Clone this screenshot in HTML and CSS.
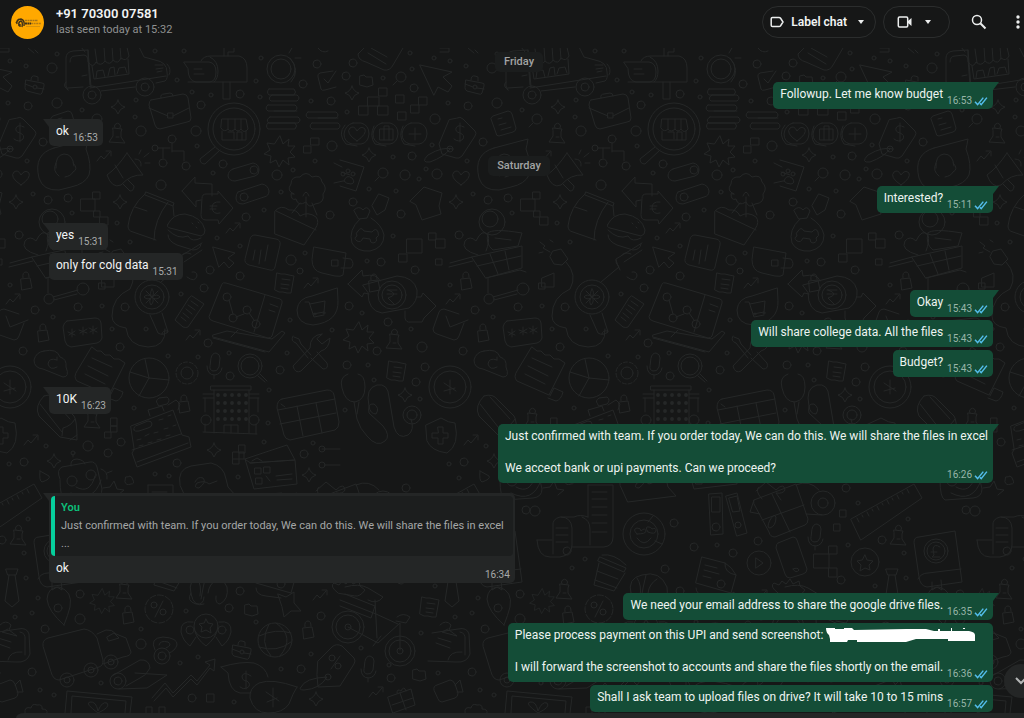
FILE: index.html
```html
<!DOCTYPE html>
<html lang="en">
<head>
<meta charset="utf-8">
<meta name="viewport" content="width=device-width, initial-scale=1">
<title>+91 70300 07581</title>
<link rel="stylesheet" href="styles.css">
</head>
<body>
<svg class="defs" width="0" height="0" aria-hidden="true">
  <defs>
    <symbol id="ticks" viewBox="0 0 14 10"><path d="M1 5.8 L3.6 8.6 L9.3 1.6 M6 7.4 L7.2 8.6 L12.9 1.6"/></symbol>
    <path id="spark" d="M0 -7 Q1.500 -1.500 7 0 Q1.500 1.500 0 7 Q-1.500 1.500 -7 0 Q-1.500 -1.500 0 -7Z"/>
    <path id="burst" d="M0 -15 L3 -7 L9 -12 L8 -5 L15 -5 L10 1 L15 6 L8 7 L9 14 L3 9 L-1 16 L-4 9 L-10 12 L-9 5 L-16 3 L-10 -1 L-13 -8 L-6 -7Z"/>
    <path id="pin" d="M-4 -7 L5 -6 L4 -3 L4 2 L8 8 L-8 7 L-4 1 L-4 -4Z M-2 -7 a3 3 0 1 1 5 0 M-1 2 l3 0"/>
    <path id="lock" d="M-5 -3 L4 -4 L6 6 L-4 8Z M-3 -4 q-1 -6 3 -6 q3 0 3 5"/>
    <path id="zig" d="M-7 5 L-3 0 L0 3 L6 -4 M2 -5 L7 -5 L7 0"/>
    <path id="lens" d="M5 0 a5 5 0 1 1 -10 0 a5 5 0 1 1 10 0 M-4 4 l-4 4"/>
    <path id="heart" d="M0 7 Q-12 -1 -7 -6 Q-3 -9 0 -3 Q4 -9 8 -5 Q10 0 0 7Z"/>
    <path id="mic" d="M-4 -6 q1 -5 5 -5 q4 1 4 5 l-1 9 q-2 5 -6 4 q-4 -1 -3 -5Z M-8 2 q0 9 8 9 q6 -1 7 -7 M-1 11 v4"/>
    <path id="folder" d="M-6 -4 l4 -1 2 2 6 0 1 8 -6 2 -7 -2Z"/>
    <path id="case" d="M-9 -4 l16 3 q3 0 2 3 l-2 7 q-1 2 -3 1 l-12 -3 q-2 -1 -2 -3Z M-4 -4 q0 -5 4 -4 l3 1 v4 M-10 0 l8 3 M2 4 l7 1 M2 3 a2 2 0 1 1 -4 0 a2 2 0 1 1 4 0"/>
    <path id="sheet" d="M-8 -10 l4 1 4 0 4 1 5 1 -3 17 -4 0 -4 -1 -4 0 -4 -2Z M-3 -4 l8 1 M-4 1 l8 1 M-4 5 l7 1"/>
    <g id="doodles">
      <!-- delivery truck -->
      <path d="M68 90 L66 86 V58 Q66 52 73 51 L88 50 L91 87 M70 62 q0 -6 5 -6 l9 -1 q3 0 4 4 l2 26 M82 76 l5 -1 M68 88 l15 -1 M101 91 l34 -4 M156 83 l9 -2 q3 -2 2 -9 q0 -10 -12 -12 l-11 -3 -7 -14 M90 88 l76 -12 M88 50 v12 q5 7 8 0 q5 5 9 -1 q5 5 8 -1 q5 5 8 -2 q5 4 8 -2 l-3 -13 M95 49 l2 14 M104 47 l1 14 M112 46 l1 14 M120 46 l1 13 M92 66 l2 13 35 -5 -1 -15 M96 78 l1 -7 6 -1 2 7 M108 76 l2 -8 4 -1 1 8 M117 74 l2 -6 6 -1 2 6 M155 65 l8 0 M156 69 l7 -1 M157 72 l5 -1 M167 64 q5 5 2 11 M66 82 q-4 4 2 8 M81 47 l4 5"/>
      <circle cx="92" cy="95" r="9"/><circle cx="92" cy="95" r="4"/><circle cx="145" cy="87" r="9"/><circle cx="145" cy="87" r="4"/>
      <path d="M28 48 l6 5 M35 50 l3 3 M0 48 h9 v4 H0 M318 48 q4 6 10 3"/>
      <!-- mailbox and coin -->
      <path d="M184 62 h25 q7 1 7 10 q0 9 -6 10 H196 q-8 -1 -8 -13Z M201 61 q2 -5 10 -5 h28 q8 2 8 12 v14 H188 M210 57 q8 4 8 14 q0 8 -4 11 M223 82 v17 h7 v-17 M194 69 h8 M194 74 h10 M224 56 v-8 M228 56 v-4 h6 v-4 M289 53 l3 -5 M295 58 h6"/>
      <circle cx="281" cy="69" r="14"/><circle cx="281" cy="69" r="10"/><path d="M290 58 q11 13 1 24"/>
      <path d="M333 71 l-13 2 q-3 1 -2 4 l3 12 q1 2 4 1 l11 -3 M324 79 l4 4 8 -12"/>
      <use href="#case" x="35" y="84"/>
      <!-- briefcase -->
      <path d="M151 100 l32 -6 q4 0 5 4 l3 20 q0 4 -4 4 l-27 7 q-4 0 -5 -4 l-6 -20 q0 -4 2 -5Z M161 98 q-1 -4 3 -4 l6 -1 q3 0 3 3 M149 108 l19 8 M173 116 l16 -8 M168 113 h5 v5 h-5Z"/>
      <!-- store magnifier -->
      <circle cx="234" cy="129" r="26"/><circle cx="234" cy="129" r="21"/>
      <path d="M215 147 l-15 12 q0 5 5 5 l15 -14 M222 119 h24 l2 10 q-4 5 -7 0 q-3 4 -6 0 q-4 4 -7 0 q-4 4 -7 -1Z M228 119 v10 M235 119 v10 M241 119 v10 M222 131 v9 h24 v-9 M228 132 h6 v7 M237 140 v-8 h5 v8"/>
      <!-- coin stacks -->
      <path d="M269 89 h25 q3 3 0 6 h-25 q-3 -3 0 -6Z M272 95 h25 q4 3 0 6 h-26 q-4 -3 1 -6Z M268 105 h27 q4 3 0 6 h-27 q-4 -3 0 -6Z M274 111 h23 M270 117 h28 q4 3 0 6 h-29 q-4 -3 1 -6Z M268 123 h27 q3 3 0 6 h-27 q-3 -3 0 -6Z M308 112 h28 q4 3 0 6 h-28 q-4 -3 0 -6Z M312 123 h26 q4 3 0 6 h-26 q-4 -3 0 -6Z M318 118 h20"/>
      <use href="#spark" x="118" y="107"/><use href="#pin" x="117" y="135"/><use href="#burst" x="280" y="151"/>
      <path d="M304 146 h7 v7 h-7Z M311 138 h8 v7 h-8Z"/>
      <!-- price tag -->
      <path d="M17 118 q3 -2 6 1 l12 12 q2 2 0 5 l-13 20 q-3 3 -6 2 l-14 -4 -3 -10 10 -24Z M24 127 q-6 -3 -8 1 q-1 4 4 5 q5 2 3 6 q-4 4 -9 0 M20 123 v19 M13 149 q-10 -3 -25 6 q-8 8 2 7 q14 -5 20 -13"/><circle cx="10" cy="149" r="3"/>
      <!-- support bubble -->
      <path d="M54 148 l34 -9 q-1 6 -2 10 q6 16 3 26 q-4 9 -18 12 l-12 3 q-16 1 -20 -12 q-6 -24 15 -30Z M56 168 q-1 -13 8 -14 q9 0 10 12 M56 163 q-4 8 3 13 M73 163 q6 6 0 9 q-2 4 -8 5"/>
      <path d="M53 116 l15 -5 q3 0 4 3 l4 14 q0 3 -3 4 l-14 4 q-3 0 -3 -3 l-5 -14Z M58 119 l4 -1 M59 125 l7 -2 M61 130 l10 -3"/><use href="#lens" x="97" y="119"/><use href="#zig" x="104" y="156"/>
      <!-- megaphone -->
      <path d="M127 153 l16 22 q-12 -1 -22 10 q-9 4 -14 -10 q10 -7 20 -22Z M115 165 l8 13 M123 184 l7 7 q4 0 4 -5 l-6 -6 M135 159 q7 0 6 7 M139 154 l2 -4 M144 157 l5 -4 M145 163 h5"/>
      <path d="M158 148 h12 M172 143 v9 M172 151 h12 v10 M163 148 v10"/><circle cx="155" cy="148" r="3"/><circle cx="172" cy="139" r="4"/><circle cx="163" cy="163" r="4"/><circle cx="186" cy="166" r="4"/>
      <path d="M233 169 l20 -6 q6 1 6 7 q0 5 -4 6 l-20 5 q-6 0 -7 -5 q0 -5 5 -7Z"/><circle cx="254" cy="170" r="4"/>
      <!-- page, cursor, pixels -->
      <path d="M364 48 l-6 6 q0 6 8 8 l18 8 q6 1 9 -5 l10 -17 M371 48 l16 9 M368 53 l18 11 M420 65 l32 7 -9 5 9 9 -4 6 -10 -5 -4 8Z"/>
      <use href="#folder" x="366" y="80"/><use href="#lens" x="401" y="77"/><use href="#spark" x="352" y="93"/>
      <path d="M359 106 h9 v9 h-9Z M368 97 h11 v9 h-11Z M379 88 h8 v8 h-8Z M378 106 h10 v9 h-10Z M396 95 h8 v8 h-8Z M398 112 h8 v8 h-8Z M411 105 h8 v8 h-8Z M419 97 h8 v8 h-8Z"/>
      <path d="M353 123 h8 q8 2 8 11 q-1 9 -8 10 h-9 q-8 -2 -8 -10 q1 -9 9 -11Z M382 123 h8 q8 2 8 11 q-1 9 -8 10 h-9 q-8 -2 -8 -10 q1 -9 9 -11Z M411 123 h8 q8 2 8 11 q-1 9 -8 10 h-9 q-8 -2 -8 -10 q1 -9 9 -11Z M345 125 q-8 9 1 19 l11 2 M374 126 q-5 10 1 18 l11 2 M403 126 q-5 10 1 18 l11 2 M380 129 h13 v11 h-13Z M384 129 v-3 h5 v3 M384 129 v11 M389 129 v11 M415 128 v12 M409 134 h12"/>
      <use href="#heart" x="357" y="134"/><use href="#spark" x="369" y="155"/>
      <path d="M340 160 l24 7 -8 24 -16 -5 M334 163 l8 4 M334 183 l9 -2 M341 172 l9 3"/><path d="M344 181 q2 -7 8 -3 q4 5 -1 6 q-5 0 -7 -3Z"/><circle cx="343" cy="174" r="2"/><circle cx="348" cy="171" r="2"/><circle cx="353" cy="174" r="2"/>
      <use href="#lens" x="383" y="173"/><use href="#heart" x="21" y="178"/>
      <path d="M410 201 l14 -14 18 6 -3 13 2 8 -19 6 -6 -15Z"/><use href="#spark" x="16" y="202"/><use href="#spark" x="120" y="202"/>
      <!-- treat sack -->
      <path d="M360 219 q-12 11 -8 24 q5 9 18 8 q14 -3 14 -16 q-2 -10 -13 -17 M354 210 q5 -5 9 0 q4 -5 7 1 l-3 7 -8 1Z M358 231 q3 -5 6 0 l8 1 q4 -5 6 0 q2 4 -2 6 q2 4 -3 5 q-3 0 -3 -4 l-7 -1 q-2 5 -6 3 q-4 -3 0 -5 q-2 -3 1 -5Z M379 194 l10 4 -4 12 -8 5 -5 -9Z"/>
      <path d="M81 199 h14 v12 h-14Z M93 192 h7 v7 h-7Z M94 211 h6 v6 h-6Z M100 217 h8 v8 h-8Z M407 239 h15 v14 h-15Z M399 254 h8 v8 h-8Z M429 233 h7 v7 h-7Z M436 239 h9 v9 h-9Z M436 259 h6 v6 h-6Z"/>
      <!-- cart -->
      <circle cx="52" cy="222" r="13"/><circle cx="50" cy="219" r="8"/>
      <path d="M38 255 q-18 -5 -13 -14 q5 -6 11 0 q6 -13 12 -6 q2 6 -2 16 M48 233 q4 -5 34 0 l-4 13 -25 4 q-8 -6 -5 -17Z M55 238 l16 2 M32 257 l50 -11 v22 l-36 10Z M10 263 l22 -6 M9 267 l24 -6 M50 254 l8 20 M65 251 l4 19 M37 266 l44 -10 M46 278 l34 -8 6 2 M48 278 v15 M53 297 l25 -7 M54 300 l23 -6"/><circle cx="49" cy="299" r="5"/><circle cx="83" cy="289" r="6"/>
      <!-- grocery bag and burger -->
      <path d="M146 192 l28 11 -1 3 -28 -11Z M145 194 q-15 13 -17 32 q0 5 5 6 l23 8 M173 206 l1 10 M168 202 q-14 18 -14 38 M135 207 l12 4 M168 224 q5 -10 17 -10 q17 3 20 16 q0 5 -4 6 l-31 -8 q-4 -1 -2 -4Z M168 230 q10 10 20 6 q4 7 13 2 M168 235 q0 6 9 10 l16 5 q7 0 8 -6 M192 223 l1 1 M196 227 l1 1 M198 222 l1 1"/>
      <path d="M182 191 l13 -14 v6 l17 1 v12 M182 191 l14 16 v-6 l5 -1 M202 198 q0 -4 4 -4 h12 v-3 l15 17 -14 16 -1 -4 h-12 q-5 0 -5 -5Z M220 202 q-8 -1 -8 6 q1 7 8 5 M210 206 h7 M210 209 h6"/>
      <path d="M238 192 l24 -8 q6 1 7 7 q0 5 -5 6 l-21 7 q-7 0 -7 -6 q0 -4 2 -6Z"/><circle cx="244" cy="197" r="4"/><use href="#zig" x="233" y="228"/>
      <!-- planter -->
      <path d="M294 194 q-8 -3 -3 -10 q0 -8 9 -7 q6 -7 12 0 q9 -3 10 5 q6 6 1 12 q2 9 -8 10 q-6 5 -9 -2 q-8 5 -10 -3 q-5 2 -5 -5Z M303 196 q3 -8 6 0 M306 197 v20 M312 203 l5 12 M300 203 l-8 10 M275 211 q6 -7 14 -1 q8 -1 11 6 q8 -5 16 1 q4 5 -1 12 l-11 16 -29 -11Z M276 211 l40 19"/>
      <path d="M250 239 q1 -4 5 -4 l21 4 q5 1 4 6 l-5 22 q-1 4 -5 3 l-21 -5 q-5 -2 -4 -6Z M255 250 l-2 10 M261 250 l-2 14 M268 245 l-3 16 M213 247 l22 6 -7 5 6 5 -5 5 -5 -6 -5 5Z M314 247 l32 6 -3 22 q-2 2 -8 1 l-13 -3 q-10 -2 -10 -13Z M343 258 l8 1 q4 5 0 9 l-10 0 M332 260 h6 v6 h-6Z M100 242 l5 4 -2 2 7 4 M110 240 l3 2 M103 252 l-4 1 M113 251 l8 -2 7 10 -6 6 -8 -1 -4 -7Z M126 262 q12 13 4 27 q-18 8 -18 27 q0 10 14 12 q2 18 22 19 q18 0 17 -18"/>
      <use href="#sheet" x="285" y="283"/><use href="#zig" x="311" y="283"/><use href="#lock" x="26" y="282"/><use href="#zig" x="13" y="299"/>
      <path d="M102 278 l12 -5 v14 h-12Z M99 283 h6 v6 h-6Z"/>
      <!-- hair dryer -->
      <circle cx="152" cy="297" r="17"/><circle cx="152" cy="297" r="12"/><path d="M152 289 q-3 5 0 8 q3 -4 0 -8Z M152 297 q-5 -4 -8 0 q4 4 8 0Z M152 297 q5 -4 8 0 q-4 4 -8 0Z M152 297 q-4 4 -1 8 q4 -4 1 -8Z M146 291 l12 12 M158 291 l-12 12 M161 282 l18 -15 q-4 -4 -3 -8 l26 -16 M180 270 q-3 -6 -4 -10 M184 262 l18 -12 M181 256 q3 -5 10 -2 M187 277 q8 6 10 -1 q0 -5 -5 -4 M150 315 l8 18 q5 3 10 -1 l-6 -19 M162 334 q0 -4 6 -3"/>
      <path d="M192 296 l12 8 -16 23 q-2 1 -5 0 l-8 -7 14 -22Z M183 313 l6 5 M186 309 l6 5 M188 305 l7 5 M191 301 l7 5 M181 317 l5 4"/>
      <!-- laptop -->
      <path d="M222 284 q1 -2 4 -1 l54 16 q3 1 2 4 l-10 33 q-1 2 -4 2 l-55 -17 q-4 -1 -4 -4Z M265 295 l-11 37 M270 304 l8 3 M269 310 l6 2 M213 335 l14 -4 45 8 10 -8 3 2 -16 19 -56 -15Z M213 338 l52 14 M238 330 l-7 7 M229 300 l4 14 M236 317 l8 -3 M249 313 l5 7"/><circle cx="227" cy="297" r="4"/><circle cx="233" cy="318" r="4"/><circle cx="247" cy="310" r="4"/><circle cx="256" cy="324" r="4"/>
      <path d="M337 288 l-25 8 q-14 2 -15 14 q0 14 16 15 q26 -3 25 -24Z M305 302 l4 0 5 15 10 -2 M310 304 l15 -3 -1 11 -11 2"/><circle cx="315" cy="314" r="1"/><circle cx="324" cy="313" r="1"/>
      <!-- rupee exchange -->
      <path d="M348 284 l14 -14 1 6 q15 -3 17 5 M348 284 l14 13 2 -4 5 1 M363 285 l34 -9 q17 1 20 14 q1 12 -8 18 l-27 5 q-14 -2 -14 -20Z M405 311 v7 q1 5 6 4 l11 0 2 -4 12 -12 -13 -13 -2 4 h-4"/><circle cx="392" cy="295" r="14"/><circle cx="392" cy="295" r="10"/><path d="M387 290 h10 M387 294 h10 M388 290 q12 4 0 8 l6 6"/>
      <path d="M19 314 l-15 -5 q-4 0 -5 3 l-6 17 q0 4 4 5 l17 6 q4 0 5 -4 l5 -13 M6 316 l4 11 18 -7"/>
      <use href="#lock" x="43" y="334"/><use href="#lock" x="374" y="284"/><use href="#zig" x="193" y="335"/>
      <path d="M67 321 l28 -3 q5 0 6 5 l1 15 q-1 4 -5 5 l-26 4 q-5 -1 -6 -6 l-2 -14 q1 -5 4 -6Z M72 329 v8 M68 332 l7 3 M75 331 l-6 4 M83 327 v8 M79 330 l8 3 M87 329 l-7 4 M93 326 v8 M89 328 l8 4 M97 328 l-7 4"/>
      <!-- tools, lens, cloud -->
      <path d="M294 337 l5 2 2 5 10 11 M293 336 q-3 5 3 7 l12 15 M322 334 q-12 1 -12 14 l-17 18 q2 8 8 5 l20 -20 q8 -2 9 -13 l-8 6 -5 -5Z M311 358 l12 11 q6 0 4 -6 l-10 -11"/>
      <circle cx="250" cy="366" r="12"/><circle cx="250" cy="366" r="9"/><path d="M260 374 l7 7 M258 376 l7 6"/>
      <path d="M44 351 q13 -3 16 6 q7 2 6 10 q4 10 -3 10 l-20 -8 q-9 -1 -9 -9 q2 -8 10 -9Z M57 360 q-8 -3 -9 4 q2 7 9 3 M57 360 v-3"/>
      <path d="M92 347 l5 4 4 0 4 4 5 0 4 4 5 0 6 4 -16 32 -32 -14 q-4 -4 0 -10Z M92 358 l20 9 M88 366 l20 10 M85 374 l20 10 M110 396 l4 -8 9 4 q-2 8 -7 9 l-8 -3"/>
      <circle cx="149" cy="378" r="20"/><path d="M149 378 l-4 -19 M149 378 l20 2 M149 378 l-10 18 M149 378 l-19 -6"/>
      <circle cx="187" cy="373" r="6"/><circle cx="187" cy="373" r="11" stroke-dasharray="4 2"/><use href="#mic" x="215" y="364"/><use href="#burst" x="359" y="337"/><use href="#pin" x="394" y="341"/><use href="#sheet" x="397" y="371"/>
      <circle cx="10" cy="387" r="21"/><circle cx="10" cy="387" r="16"/><path d="M10 380 v14 M4 383 l12 8 M4 391 l11 -3"/>
      <!-- stethoscope -->
      <path d="M348 374 q-9 3 -6 14 q3 14 13 14 q10 -2 10 -15 q0 -12 -7 -13 M354 402 l3 17 q3 10 10 17 q10 12 18 5 q6 -5 -2 -15 l-14 -13 q-2 -10 5 -9 q6 4 2 10 q-6 0 -7 -8 q-4 -18 8 -21 q11 -2 12 12 l5 30 q4 13 14 8 q7 -5 3 -16 M359 402 l-2 12"/><circle cx="412" cy="415" r="9"/><circle cx="412" cy="415" r="5"/><use href="#spark" x="405" y="395"/>
      <!-- clinic -->
      <path d="M211 386 h40 v4 h-40Z M214 390 v43 M249 390 v43 M203 394 h11 M203 398 h11 M249 394 h10 M249 398 h10 M205 398 v14 M258 398 v14 M203 432 l54 2 M256 424 v10 M205 424 v8 M224 433 v-8 h14 v8 M231 425 v8"/>
      <path d="M218 395 h0 M225 395 h0 M232 395 h0 M239 395 h0 M246 395 h0 M218 403 h0 M225 403 h0 M232 403 h0 M239 403 h0 M246 403 h0 M218 411 h0 M225 411 h0 M232 411 h0 M239 411 h0 M246 411 h0 M218 419 h0 M225 419 h0 M232 419 h0 M239 419 h0 M246 419 h0" stroke-width="4"/><circle cx="206" cy="420" r="5"/><circle cx="254" cy="420" r="5"/>
      <path d="M282 399 l45 -9 q6 0 7 5 l5 27 q0 6 -4 8 l-45 10 q-5 -1 -6 -5 l-7 -27 q0 -8 5 -9Z M278 410 l57 -11 M280 424 l56 -11 M297 406 l6 30 M316 403 l6 30 M281 404 l4 3"/>
      <path d="M-14 425 l15 -7 q8 5 14 5 q5 22 -8 30 q-16 -2 -20 -12Z M-2 427 h5 v6 h5 v5 h-5 v6 h-5 v-6 h-6 v-5 h6Z"/><use href="#zig" x="31" y="440"/>
      <!-- pencil, register -->
      <path d="M44 396 q9 -3 14 4 l16 16 q3 4 3 24 l-17 -3 -21 -21 q-5 -10 5 -20Z M40 404 l22 28 M50 397 l20 22 M62 436 l1 -8 q8 -2 12 -9 M70 440 l7 -5"/>
      <path d="M131 426 l42 -16 9 25 7 2 2 10 -54 20 -5 -14 2 -3Z M132 450 l49 -16 M137 462 l51 -19 M150 416 l-2 -6 14 -4 2 5 M134 430 q-1 -4 4 -5 l10 -4 q4 0 4 3 q0 3 -4 4 l-9 3 q-4 1 -5 -1Z M159 420 l4 -1 M168 416 l3 -1 M137 440 l4 -1 M145 436 l4 -2 M154 433 l4 -1 M164 429 l4 -1 M173 426 l3 -1 M139 446 l4 -1 M148 443 l4 -1 M157 440 l4 -1 M166 436 l4 -1"/>
      <path d="M157 403 q-2 -2 2 -5 l8 -1 q4 3 0 7 l-8 2Z M168 405 l8 -5 4 4 -2 6 M111 418 h6 v8 h-6Z M111 426 h6 v6 h-6Z M105 432 h6 v6 h-6Z M239 445 h6 v8 h-6Z M233 452 h6 v12 h-6Z M239 452 h5 v7 h-11"/><use href="#pin" x="92" y="420"/><use href="#lock" x="184" y="405"/><use href="#spark" x="54" y="461"/><use href="#spark" x="214" y="450"/>
      <!-- robot -->
      <path d="M60 479 q-4 -9 2 -12 l28 -5 q5 -1 7 5 l5 22 q0 8 -9 9 l-28 2 q-5 -2 -5 -20Z M71 466 q-1 -7 6 -7 q7 1 8 5 M73 457 v-3 M76 487 q14 8 19 -11 M71 493 q22 11 30 -13 M101 469 q7 2 6 10 M107 473 l5 -2 M103 488 l7 -1 4 -6 3 8 7 1 -6 5"/><circle cx="73" cy="453" r="2"/><circle cx="72" cy="481" r="5"/><circle cx="91" cy="475" r="5"/><path d="M40 471 l9 5 q2 3 -7 6 q-3 -1 -2 -11Z M126 477 q4 0 3 -1 q3 0 4 4 q2 4 -2 4 q-5 2 -6 -2Z"/>
      <path d="M180 485 q-3 -16 11 -19 l20 -3 q13 3 15 16 l2 8 8 9 -48 6Z M195 482 q3 -6 8 -4 q4 4 -4 10 q-6 0 -2 -5 q8 -3 12 1 l8 -3"/>
      <path d="M245 459 l42 -14 8 15 -44 3Z M250 463 l45 -3 2 24 -43 5 -9 -30 M255 468 h6 v6 h-6Z M264 467 h6 v6 h-6Z M256 478 h6 v6 h-6Z M266 476 l4 5 M276 476 l16 -2 M277 480 l15 -1 M252 461 l5 -3 5 3"/><use href="#spark" x="309" y="475"/>
      <path d="M322 449 h18 M325 465 h15 M316 491 l10 -9 10 8 q8 -8 9 0 q-2 4 -9 3 l5 7 M322 499 q-8 -9 -3 -12"/><circle cx="322" cy="449" r="3"/><circle cx="322" cy="465" r="3"/>
      <!-- ruler, tie -->
      <path d="M-29 519 l63 -35 8 14 -61 42Z M-23 518 l2 4 M-18 515 l1 2 M-13 512 l2 4 M-8 509 l1 2 M-3 506 l2 4 M2 503 l1 2 M7 500 l2 4 M12 498 l1 2 M17 495 l2 4 M22 492 l1 2 M27 489 l2 4"/>
      <use href="#pin" x="18" y="537"/><path d="M6 569 h12 l-2 6 h-8Z M9 575 l-4 26 7 6 7 -6 -4 -26"/>
      <path d="M148 485 h25 v52 q0 9 -9 10 h-32 M148 485 v32 M148 517 q-8 -3 -14 0 h-14 q-8 2 -7 9 v28 M97 540 h15 M97 540 q1 17 13 17 l10 0 q12 -2 12 -12 v-17 q-1 -11 -11 -11 M142 517 q8 3 8 12 v16 M152 492 h15 M152 499 h15 M152 507 h15 M152 515 h15 M152 523 h15 M152 532 h15 M116 528 h12 M116 535 h12 M116 542 h12"/>
      <circle cx="204" cy="534" r="21"/><circle cx="204" cy="534" r="14"/><path d="M197 534 q-5 -5 0 -6 q4 0 4 3 q4 -4 5 0 q0 3 -9 3Z M208 532 q-4 -6 1 -5 q2 0 3 2 q4 -2 4 2 q-1 4 -8 1Z M197 538 q7 10 14 0 M213 516 l-5 6 M222 544 l-7 -3"/>
      <path d="M160 557 l26 11 -2 4 -26 -11Z M162 555 q12 -2 24 10 M159 563 l-5 22 20 6 11 -18 M157 571 l21 8 M155 580 l22 8"/>
      <path d="M191 594 q-4 -16 11 -19 q18 -5 25 12 q2 12 -7 17 q-5 0 -4 -8 M197 578 q5 7 3 18 M206 575 q-3 12 -5 24 M217 579 q-8 5 -9 14 M191 594 q3 14 13 10"/>
      <path d="M269 494 l13 -1 1 41 -12 1Z M272 497 h8 v15 h-8Z M286 496 l11 -3 10 40 -10 3Z M289 498 l8 -2 3 15 -7 1Z"/><circle cx="276" cy="527" r="4"/><circle cx="298" cy="525" r="3"/>
      <path d="M314 500 l42 -16 12 35 q0 5 -3 6 l-30 12 q-5 0 -6 -5 l-15 -28Z M322 520 l42 -15 M332 494 l18 38 M330 520 q-4 8 0 8 q6 -2 6 -11 q-2 -4 -6 3 M314 500 l-4 12 10 2 M356 485 q13 -6 23 5"/><circle cx="383" cy="503" r="12"/><circle cx="383" cy="503" r="5"/><path d="M366 514 l16 1"/>
      <path d="M34 542 q0 -5 5 -5 l36 -6 7 51 -35 5 q-7 -1 -8 -10Z M38 579 q3 -6 10 -6 l33 -4 M52 582 v8 l5 -3 5 3 -1 -10"/><circle cx="56" cy="551" r="12"/><circle cx="56" cy="551" r="9"/><path d="M60 547 q-6 -4 -7 2 l1 6 -2 2 h8 M51 552 h6"/>
      <circle cx="319" cy="563" r="12"/><path d="M316 558 l7 5 -7 5Z M338 543 l15 -6 q3 0 4 3 l10 29 q0 4 -4 5 l-13 4 q-4 0 -5 -4 l-9 -26 q0 -4 2 -5Z M353 569 q5 -2 6 1 q-3 4 -6 -1"/><use href="#mic" x="376" y="535"/>
      <circle cx="425" cy="562" r="14"/><path d="M425 555 l2 5 6 1 -4 4 1 5 -5 -2 -5 3 1 -6 -4 -4 5 -1Z M389 546 h8 v8 h-8Z M374 554 h15 v14 h-15Z M389 568 h8 v9 h-8Z M400 510 h6 v7 h-6Z M394 524 h6 v7 h-6Z"/>
      <path d="M262 557 l23 6 q7 4 11 12 l-5 18 -35 -10Z M265 565 l12 3 M264 570 l15 4 M263 576 l8 2 M285 563 q-1 10 11 12"/><circle cx="281" cy="584" r="4"/><path d="M338 593 q-9 -7 -4 -10 l5 2 3 -4 4 3 4 -5 3 5 6 -3 1 5 5 4 q-5 7 -10 6Z"/>
      <!-- bicycle -->
      <circle cx="348" cy="627" r="16"/><circle cx="348" cy="627" r="12"/><circle cx="400" cy="651" r="15"/><circle cx="400" cy="651" r="11"/><circle cx="400" cy="651" r="3"/><circle cx="348" cy="627" r="3"/><path d="M348 627 l30 16 22 -20 v27 M375 600 l2 38 M340 600 l36 14 22 10 M345 594 l30 12 -4 12 -31 -12 M397 617 q6 -5 13 0 l-4 6 -10 -2 M373 646 l8 -10 M345 587 q14 -4 23 1 l15 9 q-6 8 -15 3"/>
      <path d="M-8 633 l26 -4 q9 -2 11 5 l1 20 q-3 9 -14 8 l-28 -1 M0 625 q6 -6 11 0 l-2 5 8 6 -15 -4 6 -3 M-2 638 l13 4 M-4 643 l14 5 M8 660 q2 -9 14 -8 M20 632 q6 1 5 8 v15"/>
      <path d="M64 625 q-16 -14 -17 -26 q1 -12 12 -12 q14 4 11 20 q-2 8 -6 18Z"/><circle cx="58" cy="608" r="4"/><use href="#burst" x="103" y="601" transform="translate(20 120) scale(.8)"/><use href="#lock" x="128" y="616"/><use href="#pin" x="124" y="591"/>
      <circle cx="159" cy="609" r="14" stroke-dasharray="6 2"/><circle cx="154" cy="605" r="3"/><circle cx="163" cy="612" r="3"/><path d="M163 601 l-8 16"/>
      <path d="M191 593 q-5 8 5 11 q8 1 8 -7 M278 594 l8 3 8 -5 0 11 7 8 -10 0 -7 6 -2 -10Z M256 588 q0 7 10 8 l15 2"/>
      <circle cx="206" cy="626" r="12"/><path d="M194 628 q2 11 12 18 q10 -8 12 -18 M206 619 l2 4 5 1 -3 4 1 5 -5 -3 -5 2 1 -5 -3 -3 5 -1Z M193 622 q-13 -2 -12 10 q2 9 9 14 l6 -9 M219 622 q13 -2 12 10 q-2 9 -9 14 l-6 -9"/><circle cx="190" cy="630" r="4"/><circle cx="222" cy="630" r="4"/>
      <circle cx="275" cy="640" r="17"/><path d="M269 624 q-10 19 2 32 M276 623 q20 14 4 33 M259 636 q17 -8 32 -3 M259 647 q18 6 32 -5"/><use href="#case" x="242" y="649"/><use href="#lock" x="308" y="631"/><use href="#folder" x="251" y="609"/><use href="#zig" x="320" y="595"/><use href="#sheet" x="430" y="607"/>
      <!-- van -->
      <path d="M43 646 q-1 -6 5 -8 l36 -9 q8 1 13 9 l6 22 q0 6 -4 7 l-40 13 q-6 0 -8 -8Z M97 634 l9 -4 q6 -1 10 4 l10 4 5 14 q0 4 -8 5 l-20 7 M107 637 l7 -4 5 5 -10 3Z"/><circle cx="67" cy="680" r="7"/><circle cx="67" cy="680" r="3"/><circle cx="91" cy="670" r="7"/><circle cx="91" cy="670" r="3"/><circle cx="111" cy="662" r="7"/><circle cx="111" cy="662" r="3"/>
      <circle cx="162" cy="656" r="8"/><circle cx="162" cy="656" r="4"/><path d="M155 650 q-6 -12 8 -13 q15 1 14 8 q-2 6 -8 8 M159 645 q1 -5 9 -3 q5 3 -2 6"/>
      <circle cx="118" cy="681" r="8"/><circle cx="118" cy="681" r="4"/><path d="M112 676 l28 -16 q9 -1 10 8 q-4 8 -10 10 l-14 8 M135 673 l32 2 -20 13 -28 1"/>
      <path d="M152 698 l13 -15 8 10 18 -18 6 6 13 -16 -5 -3 10 -3 -1 12 -4 -3 -13 17 -6 -6 -18 18 -7 -9 -12 13"/>
      <path d="M221 667 q20 -6 33 -4 q12 4 14 14 M221 667 l7 6 q1 18 12 20 l11 0 M251 676 q-7 -5 -9 0 q0 5 5 5 q5 4 0 7 q-4 2 -7 -1 M246 671 v18 M297 687 q-25 -9 -38 -4 q-10 5 -9 15 q4 15 18 15 q15 0 21 -9 q4 -11 8 -17Z M273 688 v19 M266 692 l13 9 M267 702 l10 -4"/>
      <path d="M318 661 l14 -14 q4 -4 10 -1 l12 12 q2 3 0 6 l-14 22 -22 1 -1 -12Z M301 687 q4 -9 26 -10 q-7 12 -23 13 q-6 0 -3 -3Z"/><circle cx="328" cy="677" r="3"/><circle cx="332" cy="658" r="3"/><circle cx="338" cy="666" r="3"/><path d="M340 656 l-9 13"/>
      <path d="M65 713 l2 -22 65 6 -2 16 M71 713 l1 -17 54 5 -1 12 M98 713 q-14 -10 -8 -11 q6 -1 8 9 q4 -10 9 -8 q4 4 -9 10 M146 713 v-6 h6 v6 M159 713 v-6 h6 v6 M207 694 h7 v8 h-7Z"/><use href="#spark" x="316" y="699"/><use href="#mic" x="369" y="667"/><use href="#folder" x="419" y="674"/><use href="#zig" x="376" y="692"/>
      <path d="M434 690 q-1 -4 3 -5 l13 -5 q3 0 5 4 l3 9 q0 4 -3 5 l-13 4 q-3 0 -4 -3Z M455 685 l5 -5 3 12 -6 0 M388 697 l23 -8 4 16 -22 8Z M392 705 l21 -7 M400 693 l6 17 M397 693 q0 -5 4 -2 q3 -6 5 0 M25 713 q-1 -7 6 -5 q1 -5 6 -3 q6 -1 5 4 q6 0 5 4"/>
      <!-- scattered bubbles -->
      <g><circle cx="10" cy="61" r="2"/><circle cx="26" cy="66" r="2"/><circle cx="52" cy="68" r="5"/><circle cx="57" cy="54" r="2"/><circle cx="155" cy="51" r="2"/><circle cx="184" cy="51" r="2"/><circle cx="177" cy="80" r="2"/><circle cx="261" cy="58" r="2"/><circle cx="317" cy="64" r="4"/><circle cx="256" cy="81" r="2"/><circle cx="303" cy="84" r="4"/><circle cx="240" cy="94" r="4"/><circle cx="192" cy="92" r="2"/><circle cx="211" cy="95" r="2"/><circle cx="260" cy="97" r="2"/><circle cx="28" cy="106" r="4"/><circle cx="8" cy="103" r="2"/><circle cx="57" cy="103" r="5"/><circle cx="82" cy="110" r="2"/><circle cx="136" cy="100" r="2"/><circle cx="201" cy="105" r="4"/><circle cx="135" cy="117" r="2"/><circle cx="141" cy="131" r="5"/><circle cx="196" cy="131" r="5"/><circle cx="197" cy="146" r="2"/><circle cx="43" cy="142" r="4"/><circle cx="27" cy="161" r="2"/><circle cx="223" cy="164" r="4"/><circle cx="213" cy="173" r="2"/><circle cx="311" cy="101" r="2"/><circle cx="331" cy="101" r="4"/><circle cx="332" cy="146" r="5"/><circle cx="315" cy="161" r="2"/><circle cx="277" cy="175" r="5"/><circle cx="293" cy="170" r="2"/></g>
      <g><circle cx="353" cy="63" r="4"/><circle cx="346" cy="76" r="4"/><circle cx="410" cy="53" r="2"/><circle cx="434" cy="58" r="2"/><circle cx="412" cy="69" r="2"/><circle cx="383" cy="78" r="2"/><circle cx="414" cy="88" r="4"/><circle cx="347" cy="112" r="2"/><circle cx="435" cy="119" r="5"/><circle cx="432" cy="145" r="2"/><circle cx="412" cy="156" r="4"/><circle cx="393" cy="157" r="2"/><circle cx="405" cy="175" r="5"/><circle cx="426" cy="169" r="2"/><circle cx="437" cy="174" r="5"/><circle cx="419" cy="179" r="2"/><circle cx="353" cy="202" r="4"/><circle cx="369" cy="189" r="2"/><circle cx="396" cy="191" r="2"/><circle cx="401" cy="214" r="4"/><circle cx="393" cy="236" r="2"/><circle cx="381" cy="262" r="4"/><circle cx="367" cy="261" r="2"/><circle cx="415" cy="270" r="4"/><circle cx="33" cy="194" r="2"/><circle cx="48" cy="200" r="4"/><circle cx="68" cy="198" r="4"/><circle cx="72" cy="213" r="2"/><circle cx="19" cy="235" r="4"/><circle cx="117" cy="223" r="2"/><circle cx="130" cy="242" r="2"/><circle cx="161" cy="185" r="5"/><circle cx="246" cy="217" r="4"/><circle cx="264" cy="210" r="2"/><circle cx="281" cy="192" r="2"/><circle cx="330" cy="215" r="4"/><circle cx="217" cy="238" r="2"/><circle cx="240" cy="246" r="2"/><circle cx="291" cy="260" r="5"/><circle cx="305" cy="253" r="2"/><circle cx="210" cy="270" r="4"/><circle cx="240" cy="276" r="4"/><circle cx="300" cy="271" r="3"/></g>
      <g><circle cx="10" cy="285" r="2"/><circle cx="35" cy="310" r="4"/><circle cx="53" cy="317" r="2"/><circle cx="78" cy="307" r="4"/><circle cx="102" cy="306" r="2"/><circle cx="125" cy="307" r="4"/><circle cx="112" cy="329" r="2"/><circle cx="146" cy="329" r="2"/><circle cx="120" cy="347" r="4"/><circle cx="23" cy="351" r="4"/><circle cx="181" cy="294" r="2"/><circle cx="204" cy="288" r="4"/><circle cx="208" cy="343" r="4"/><circle cx="168" cy="356" r="2"/><circle cx="198" cy="357" r="2"/><circle cx="229" cy="353" r="2"/><circle cx="230" cy="376" r="4"/><circle cx="290" cy="320" r="2"/><circle cx="287" cy="353" r="2"/><circle cx="280" cy="370" r="4"/><circle cx="332" cy="330" r="2"/><circle cx="349" cy="306" r="4"/><circle cx="362" cy="313" r="2"/><circle cx="388" cy="322" r="4"/><circle cx="411" cy="329" r="2"/><circle cx="422" cy="347" r="5"/><circle cx="377" cy="351" r="4"/><circle cx="347" cy="365" r="4"/><circle cx="368" cy="365" r="2"/><circle cx="425" cy="367" r="4"/><circle cx="374" cy="380" r="2"/><circle cx="416" cy="382" r="4"/><circle cx="420" cy="399" r="2"/><circle cx="345" cy="410" r="2"/><circle cx="134" cy="408" r="2"/><circle cx="269" cy="390" r="2"/><circle cx="268" cy="423" r="2"/><circle cx="46" cy="446" r="2"/><circle cx="88" cy="446" r="5"/><circle cx="108" cy="453" r="4"/><circle cx="121" cy="442" r="4"/><circle cx="24" cy="462" r="4"/><circle cx="9" cy="464" r="2"/><circle cx="19" cy="478" r="2"/><circle cx="155" cy="474" r="2"/><circle cx="169" cy="476" r="2"/><circle cx="177" cy="463" r="4"/><circle cx="238" cy="477" r="2"/><circle cx="264" cy="442" r="2"/><circle cx="304" cy="454" r="4"/><circle cx="313" cy="443" r="2"/></g>
      <g><circle cx="28" cy="519" r="2"/><circle cx="24" cy="553" r="2"/><circle cx="2" cy="540" r="4"/><circle cx="26" cy="578" r="2"/><circle cx="38" cy="598" r="2"/><circle cx="32" cy="613" r="2"/><circle cx="15" cy="617" r="2"/><circle cx="80" cy="594" r="4"/><circle cx="80" cy="619" r="5"/><circle cx="45" cy="629" r="4"/><circle cx="141" cy="629" r="2"/><circle cx="141" cy="644" r="5"/><circle cx="186" cy="611" r="2"/><circle cx="229" cy="608" r="4"/><circle cx="240" cy="591" r="4"/><circle cx="256" cy="622" r="2"/><circle cx="180" cy="663" r="2"/><circle cx="198" cy="657" r="2"/><circle cx="192" cy="698" r="4"/><circle cx="301" cy="669" r="4"/><circle cx="281" cy="669" r="2"/><circle cx="311" cy="654" r="2"/><circle cx="321" cy="616" r="4"/><circle cx="32" cy="672" r="4"/><circle cx="40" cy="690" r="2"/><circle cx="54" cy="695" r="2"/><circle cx="101" cy="683" r="2"/><circle cx="234" cy="702" r="2"/><circle cx="86" cy="510" r="4"/><circle cx="95" cy="511" r="5"/><circle cx="127" cy="551" r="4"/><circle cx="132" cy="568" r="2"/><circle cx="145" cy="559" r="2"/><circle cx="225" cy="569" r="4"/><circle cx="234" cy="523" r="4"/><circle cx="254" cy="547" r="4"/><circle cx="277" cy="545" r="2"/><circle cx="293" cy="553" r="4"/><circle cx="318" cy="541" r="4"/><circle cx="406" cy="488" r="4"/><circle cx="418" cy="503" r="2"/><circle cx="408" cy="545" r="2"/><circle cx="401" cy="580" r="4"/><circle cx="435" cy="586" r="2"/><circle cx="389" cy="665" r="2"/><circle cx="391" cy="678" r="4"/><circle cx="421" cy="633" r="2"/><circle cx="361" cy="648" r="2"/><circle cx="438" cy="673" r="2"/></g>
    </g>
  </defs>
</svg>

<div class="app">
  <header class="top">
    <svg class="avatar" viewBox="0 0 33 33" role="img" aria-label="Contact photo">
      <circle cx="16.500" cy="16.500" r="16.500" fill="#ffa800"/>
      <path d="M6 18 q-1 -5 4 -5 q4 1 3 7 M8 20 q-1 -4 2 -5 q2 1 1 6 M5 17 l3 -4 M9 21 v-3" fill="none" stroke="#3e3018" stroke-width="1.400"/>
      <path d="M14 14.500 h13" stroke="#a87416" stroke-width="1.500" stroke-dasharray="2 .5"/><path d="M14 17.500 h6" stroke="#3e3018" stroke-width="2" stroke-dasharray="2 .4"/><path d="M20 17.500 h10" stroke="#b47b12" stroke-width="1.500" stroke-dasharray="2 .6"/><path d="M15 20.500 h14" stroke="#d8930c"/>
    </svg>
    <div class="who">
      <h1 class="name">+91 70300 07581</h1>
      <p class="seen">last seen today at 15:32</p>
    </div>
    <button class="pill" type="button">
      <svg class="ico" width="14" height="12" viewBox="0 0 14 12"><path d="M2.500 1.500 h6.500 q1 0 1.600 .8 L13 6 l-2.400 3.700 q-.6 .8 -1.600 .8 H2.500 q-1.300 0 -1.300 -1.300 V2.800 q0 -1.300 1.300 -1.300Z"/></svg>
      <span class="pill-text">Label chat</span>
      <svg class="caret" width="6" height="4" viewBox="0 0 6 4"><path d="M0 0 h6 L3 4Z"/></svg>
    </button>
    <button class="pill pill-video" type="button" aria-label="Video call">
      <svg class="ico" width="16" height="12" viewBox="0 0 16 12"><path d="M2.500 1 h7 q1.200 0 1.200 1.200 v7.600 q0 1.200 -1.200 1.200 h-7 q-1.200 0 -1.200 -1.200 V2.200 Q1.300 1 2.500 1Z"/><path class="solid" d="M11 5 l3.500 -3 v8 L11 7Z"/></svg>
      <svg class="caret" width="6" height="4" viewBox="0 0 6 4"><path d="M0 0 h6 L3 4Z"/></svg>
    </button>
    <button class="icon-btn" type="button" aria-label="Search">
      <svg class="ico" width="16" height="16" viewBox="0 0 16 16"><circle cx="6" cy="6" r="4.500"/><path d="M9.300 9.300 L14.500 14.500" stroke-width="2"/></svg>
    </button>
    <button class="more" type="button" aria-label="Menu">
      <svg width="4" height="14" viewBox="0 0 4 14" fill="#eceeee"><circle cx="2" cy="2" r="1.700"/><circle cx="2" cy="7" r="1.700"/><circle cx="2" cy="12" r="1.700"/></svg>
    </button>
  </header>

  <main class="chat">
    <svg class="wall" aria-hidden="true"><g transform="translate(0 -48)"><use href="#doodles" x="-440"/><use href="#doodles"/><use href="#doodles" x="440"/><use href="#doodles" x="880"/><use href="#doodles" x="1320"/><use href="#doodles" x="1760"/></g></svg>

    <div class="day">Friday</div>
    <section class="group out">
      <article class="msg tail"><div class="last"><p>Followup. Let me know budget</p><span class="meta"><time>16:53</time><svg class="ticks"><use href="#ticks"/></svg></span></div></article>
    </section>
    <section class="group in">
      <article class="msg tail"><div class="last"><p>ok</p><span class="meta"><time>16:53</time></span></div></article>
    </section>
    <div class="day">Saturday</div>
    <section class="group out">
      <article class="msg tail"><div class="last"><p>Interested?</p><span class="meta"><time>15:11</time><svg class="ticks"><use href="#ticks"/></svg></span></div></article>
    </section>
    <section class="group in">
      <article class="msg tail"><div class="last"><p>yes</p><span class="meta"><time>15:31</time></span></div></article>
      <article class="msg"><div class="last"><p>only for colg data</p><span class="meta"><time>15:31</time></span></div></article>
    </section>
    <section class="group out">
      <article class="msg tail"><div class="last"><p>Okay</p><span class="meta"><time>15:43</time><svg class="ticks"><use href="#ticks"/></svg></span></div></article>
      <article class="msg"><div class="last"><p>Will share college data. All the files</p><span class="meta"><time>15:43</time><svg class="ticks"><use href="#ticks"/></svg></span></div></article>
      <article class="msg"><div class="last"><p>Budget?</p><span class="meta"><time>15:43</time><svg class="ticks"><use href="#ticks"/></svg></span></div></article>
    </section>
    <section class="group in">
      <article class="msg tail"><div class="last"><p>10K</p><span class="meta"><time>16:23</time></span></div></article>
    </section>
    <section class="group out">
      <article class="msg tail"><p class="para">Just confirmed with team. If you order today, We can do this. We will share the files in excel</p><div class="last"><p>We acceot bank or upi payments. Can we proceed?</p><span class="meta"><time>16:26</time><svg class="ticks"><use href="#ticks"/></svg></span></div></article>
    </section>
    <section class="group in">
      <article class="msg tail reply">
        <blockquote class="quote"><p class="quote-name">You</p><p>Just confirmed with team. If you order today, We can do this. We will share the files in excel</p><p>...</p></blockquote>
        <div class="last"><p>ok</p><span class="meta"><time>16:34</time></span></div>
      </article>
    </section>
    <section class="group out">
      <article class="msg tail"><div class="last"><p>We need your email address to share the google drive files.</p><span class="meta"><time>16:35</time><svg class="ticks"><use href="#ticks"/></svg></span></div></article>
      <article class="msg"><p class="para">Please process payment on this UPI and send screenshot: <svg class="redact" viewBox="0 0 150 16" role="img" aria-label="Hidden"><path d="M0 1 H9 V2 H18 V1 L26 1 L28 3 L80 2 L100 2 L108 4 L126 4 L143 4 Q149 5 149 8 V14 H122 V12 H105 L90 12 L80 15 H31 V13 H22 L21 15 H4 V12 L3 8 Q0 6 0 1Z"/><path d="M112 2 h2 v2 h-2Z M125 1 h1 v3 h-1Z M137 1 h2 v1 h-2Z"/></svg></p><div class="last"><p>I will forward the screenshot to accounts and share the files shortly on the email.</p><span class="meta"><time>16:36</time><svg class="ticks"><use href="#ticks"/></svg></span></div></article>
      <article class="msg"><div class="last"><p>Shall I ask team to upload files on drive? It will take 10 to 15 mins</p><span class="meta"><time>16:57</time><svg class="ticks"><use href="#ticks"/></svg></span></div></article>
    </section>
    <button class="down" type="button" aria-label="Scroll to bottom"><svg width="12" height="8" viewBox="0 0 12 8"><path d="M1 1 L6 6 L11 1"/></svg></button>
  </main>
  <footer class="composer"></footer>
</div>
</body>
</html>
```

FILE: styles.css
```css
* { box-sizing: border-box; }
body {
  margin: 0;
  background: #161717;
  color: #f2f4f4;
  font-family: Roboto, "Liberation Sans", sans-serif;
  font-size: 12px;
  line-height: 16px;
}
h1, p, blockquote { margin: 0; }
button { font: inherit; color: inherit; background: none; border: 0; padding: 0; }
.defs { position: absolute; }
.app { display: flex; flex-direction: column; height: 100vh; overflow: hidden; }

.top { display: flex; align-items: center; height: 48px; flex: none; padding: 0 4px 4px 11px; }
.avatar { width: 33px; height: 33px; flex: none; }
.who { flex: 1; min-width: 0; margin-left: 12px; }
.name { font-size: 13px; line-height: 16px; font-weight: 600; }
.seen { font-size: 11px; line-height: 16px; color: #8f9191; }
.pill { display: flex; align-items: center; height: 32px; padding: 0 11px 0 7px; border: 1px solid #2b2d2d; border-radius: 16px; }
.pill-text { font-weight: 600; margin: 0 11px 0 7px; }
.pill-video { margin-left: 7px; padding: 0 18px 0 13px; gap: 12px; }
.ico { fill: none; stroke: #eceeee; stroke-width: 1.5; }
.solid { fill: #eceeee; stroke: none; }
.caret { fill: #eceeee; }
.icon-btn { display: flex; margin-left: 21px; }
.more { display: flex; margin-left: 29px; }

.chat { position: relative; flex: 1; min-height: 0; padding: 4px 31px 1px 49px; overflow: hidden; }
.wall { position: absolute; inset: 0; width: 100%; height: 100%; fill: none; stroke: #252727; stroke-width: 1; stroke-linejoin: round; stroke-linecap: round; }
.day { position: relative; left: -2px; width: fit-content; margin: 0 auto; padding: 2px 9px; border-radius: 5px; background: #1b1d1d; color: #a2a4a4; font-size: 11px; font-weight: 500; line-height: 16px; }
.group { position: relative; display: flex; flex-direction: column; align-items: flex-start; gap: 3px; margin: 10px 0; }
.group + .group { margin-top: 0; }
.out { align-items: flex-end; }
.msg { position: relative; max-width: 65%; padding: 4px 5px 7px 7px; border-radius: 5px; background: #242626; }
.out .msg { background: #144d37; color: #eef4f1; }
.in .tail { border-top-left-radius: 0; }
.out .tail { border-top-right-radius: 0; }
.tail::before { content: ""; position: absolute; top: 0; width: 6px; height: 8px; background: inherit; }
.in .tail::before { right: 100%; clip-path: polygon(0 0, 100% 0, 100% 100%); }
.out .tail::before { left: 100%; clip-path: polygon(0 0, 100% 0, 0 100%); }
.para { margin-bottom: 16px; }
.last { display: flex; justify-content: space-between; align-items: flex-end; gap: 4px; }
.meta { display: flex; align-items: center; gap: 2px; height: 12px; margin-bottom: -5px; font-size: 10px; line-height: 12px; color: #a8aaaa; }
.out .meta { color: #98b5a9; }
.ticks { width: 14px; height: 10px; fill: none; stroke: #53bdeb; stroke-width: 1.5; }
.redact { width: 150px; height: 16px; fill: #fff; vertical-align: top; }
.reply { padding-top: 3px; }
.quote { margin: 0 -3px 4px -5px; padding: 3px 9px 3px 6px; border-left: 4px solid #06cf9c; border-radius: 4px; background: #1c1e1e; color: #a4a6a6; font-size: 11px; line-height: 18px; }
.quote-name { color: #0cc07a; font-weight: 600; }

.down { position: absolute; right: -14px; bottom: 15px; display: flex; align-items: center; justify-content: center; width: 34px; height: 34px; border-radius: 50%; background: #242626; }
.down svg { fill: none; stroke: #b4b6b6; stroke-width: 2; }
.composer { flex: none; height: 5px; margin-left: 16px; border-top-left-radius: 8px 5px; background: #242626; }
```
